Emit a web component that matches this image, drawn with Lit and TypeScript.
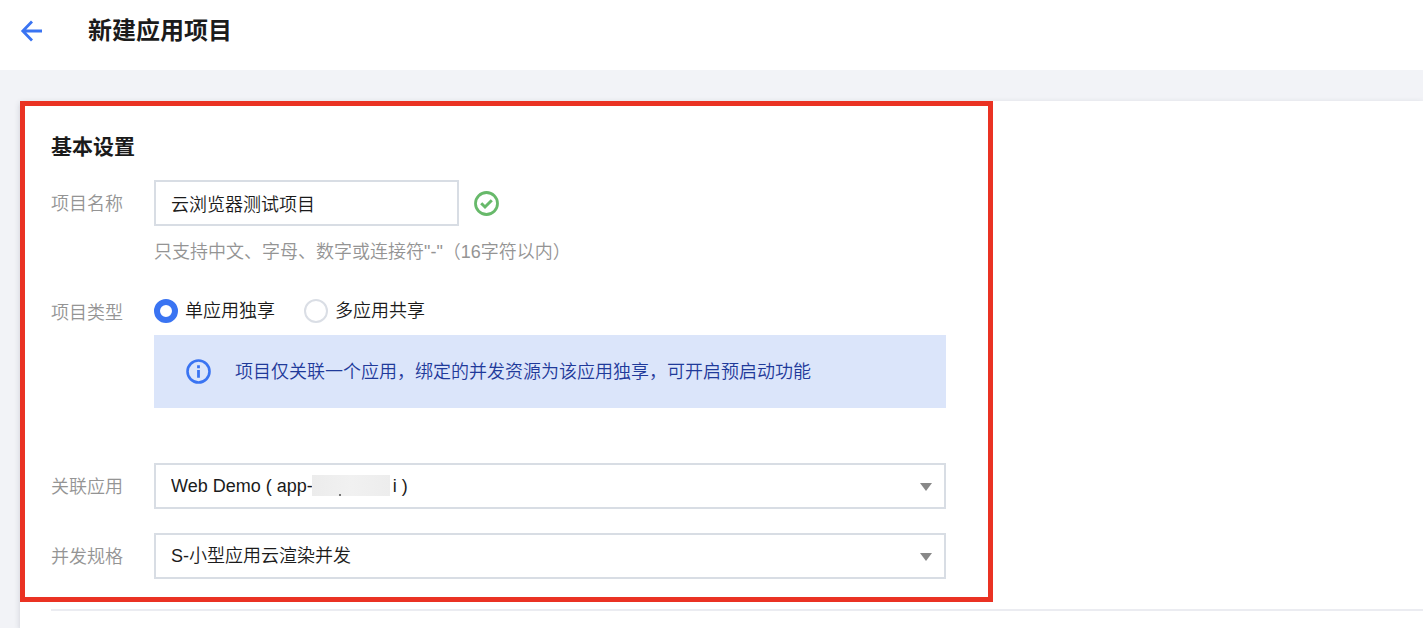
import { LitElement, html, css } from "lit";
import { customElement, state } from "lit/decorators.js";

const MASKED_APP = "Web Demo ( app-" + "\u00a0".repeat(16) + "i )";

@customElement("app-root")
export class AppRoot extends LitElement {
  static styles = css`
    :host {
      display: flex;
      flex-direction: column;
      min-height: 100vh;
      box-sizing: border-box;
      background: #f2f3f7;
      color: #1b1b1b;
      font: 350 18px/24px "Liberation Sans", "Noto Sans CJK SC", sans-serif;
    }
    * {
      box-sizing: border-box;
    }
    .header {
      display: flex;
      align-items: center;
      gap: 44px;
      height: 70px;
      padding: 0 20px 8px;
      background: #fff;
    }
    .back {
      display: flex;
      width: 24px;
      padding: 0;
      border: 0;
      background: none;
      cursor: pointer;
    }
    .title,
    .section-title {
      margin: 0;
      font-weight: 700;
    }
    .title {
      font-size: 24px;
      line-height: 32px;
    }
    .main {
      flex: 1;
      display: flex;
      padding: 31px 0 0 20px;
    }
    .card {
      flex: 1;
      background: #fff;
      box-shadow: 0 2px 6px rgba(40, 48, 70, 0.18);
    }
    .basic {
      max-width: 973px;
      padding: 26px 42px 16px 26px;
      border: 5px solid #ea3223;
    }
    .section-title {
      margin-bottom: 18px;
      font-size: 21px;
      line-height: 30px;
    }
    .row {
      display: grid;
      grid-template-columns: 103px 1fr;
    }
    .label {
      color: #949494;
      line-height: 48px;
    }
    .label.short {
      line-height: 28px;
    }
    .line {
      display: flex;
      align-items: center;
      gap: 15px;
    }
    .field {
      display: block;
      height: 46px;
      padding: 0 15px;
      border: 2px solid #d8dde4;
      border-radius: 0;
      background: #fff;
      color: inherit;
      font: inherit;
      outline: none;
    }
    .name {
      width: 305px;
    }
    .hint {
      margin: 14px 0 35px;
      color: #949494;
    }
    .radios {
      display: flex;
      gap: 29px;
    }
    .option {
      display: flex;
      align-items: center;
      gap: 7px;
    }
    .radio {
      appearance: none;
      width: 24px;
      height: 24px;
      margin: 0;
      border: 2px solid #dadee5;
      border-radius: 50%;
      background: #fff;
    }
    .radio:checked {
      border: 6px solid #3a74f2;
    }
    .notice {
      display: flex;
      align-items: center;
      gap: 24px;
      min-height: 73px;
      margin: 12px 0 55px;
      padding: 0 32px;
      background: #dbe5fa;
      color: #1f3a9a;
    }
    .select-wrap {
      position: relative;
    }
    select.field {
      width: 100%;
      appearance: none;
    }
    .caret {
      position: absolute;
      right: 14px;
      top: 20px;
      pointer-events: none;
    }
    .mask {
      position: absolute;
      left: 158px;
      top: 12px;
      width: 78px;
      height: 21px;
      background: linear-gradient(90deg, #ececec, #f1f1f1 50%, #ededed);
      pointer-events: none;
    }
    .mask::after {
      content: "";
      position: absolute;
      left: 27px;
      top: 19px;
      width: 2px;
      height: 2px;
      background: #777;
    }
    .spec {
      margin-top: 22px;
    }
    .divider {
      height: 2px;
      margin: 7px 0 0 31px;
      border: 0;
      background: #ebecf1;
    }
    svg {
      display: block;
      flex: none;
    }
  `;

  @state() private kind = "single";

  private caret() {
    return html`<svg class="caret" width="12" height="8" viewBox="0 0 12 8" aria-hidden="true">
      <path d="M0 0H12L6 8Z" fill="#888" />
    </svg>`;
  }

  private radio(value: string, text: string) {
    return html`<label class="option">
      <input
        class="radio"
        type="radio"
        name="kind"
        .checked=${this.kind === value}
        @change=${() => (this.kind = value)}
      />${text}
    </label>`;
  }

  render() {
    return html`
      <header class="header">
        <button class="back" aria-label="返回">
          <svg width="24" height="24" viewBox="0 0 24 24" fill="none" stroke="#3a74f2" stroke-width="2.8">
            <path d="M12 2.5L2.8 12L12 21.5M2.8 12H22" />
          </svg>
        </button>
        <h1 class="title">新建应用项目</h1>
      </header>
      <main class="main">
        <div class="card">
          <section class="basic">
            <h2 class="section-title">基本设置</h2>
            <div class="row">
              <label class="label" for="name">项目名称</label>
              <div>
                <div class="line">
                  <input class="field name" id="name" type="text" value="云浏览器测试项目" />
                  <svg width="25" height="25" viewBox="0 0 25 25" fill="none" stroke="#67b96a" aria-hidden="true">
                    <circle cx="12.5" cy="12.5" r="11" stroke-width="2.8" />
                    <path d="M7.2 12.2L11 16L17.8 9.2" stroke-width="3" />
                  </svg>
                </div>
                <p class="hint">只支持中文、字母、数字或连接符"-"（16字符以内）</p>
              </div>
            </div>
            <div class="row">
              <span class="label short" id="kind-label">项目类型</span>
              <div>
                <div class="radios" role="radiogroup" aria-labelledby="kind-label">
                  ${this.radio("single", "单应用独享")} ${this.radio("multi", "多应用共享")}
                </div>
                <div class="notice">
                  <svg width="25" height="25" viewBox="0 0 25 25" fill="none" stroke="#3a74f2" aria-hidden="true">
                    <circle cx="12.5" cy="12.5" r="11" stroke-width="2.6" />
                    <path d="M12.5 6.2V9.2M12.5 11V18.8" stroke-width="2.8" />
                  </svg>
                  <span>项目仅关联一个应用，绑定的并发资源为该应用独享，可开启预启动功能</span>
                </div>
              </div>
            </div>
            <div class="row">
              <label class="label" for="app">关联应用</label>
              <div class="select-wrap">
                <select class="field" id="app">
                  <option>${MASKED_APP}</option>
                </select>
                <span class="mask"></span>
                ${this.caret()}
              </div>
            </div>
            <div class="row spec">
              <label class="label" for="spec">并发规格</label>
              <div class="select-wrap">
                <select class="field" id="spec">
                  <option>S-小型应用云渲染并发</option>
                </select>
                ${this.caret()}
              </div>
            </div>
          </section>
          <hr class="divider" />
        </div>
      </main>
    `;
  }
}
